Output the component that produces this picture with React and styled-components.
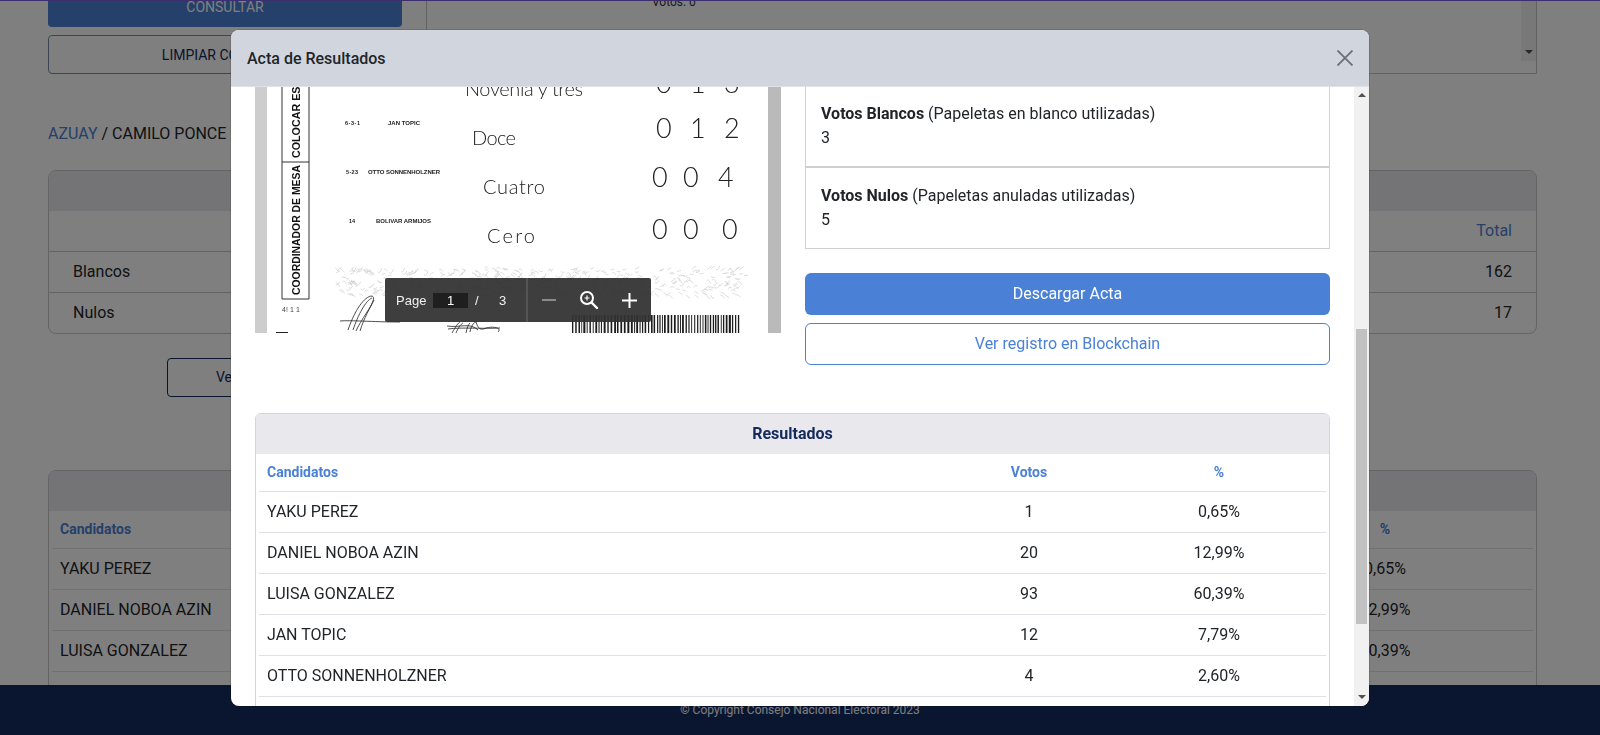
import React from 'react';
import styled, { createGlobalStyle } from 'styled-components';

const GlobalStyle = createGlobalStyle`
  html, body {
    margin: 0;
    padding: 0;
    height: 100%;
    overflow: hidden;
    background: #fff;
    font-family: Roboto, "Liberation Sans", sans-serif;
    color: #212529;
  }
  * { box-sizing: border-box; }
`;

const BLUE = '#4a80d5';
const NAVY = '#14295c';

const candidates = [
  ['YAKU PEREZ', '1', '0,65%'],
  ['DANIEL NOBOA AZIN', '20', '12,99%'],
  ['LUISA GONZALEZ', '93', '60,39%'],
  ['JAN TOPIC', '12', '7,79%'],
  ['OTTO SONNENHOLZNER', '4', '2,60%'],
  ['BOLIVAR ARMIJOS', '0', '0,00%'],
];

/* page behind the modal */
const Page = styled.div`
  height: 735px;
  display: flex;
  flex-direction: column;
  border-top: 1px solid #7a5ce0;
`;

const Main = styled.main`
  flex: 1;
  min-height: 0;
  overflow: hidden;
  padding: 0 63px 0 48px;
`;

const TopRow = styled.section`
  height: 73px;
  display: flex;
  gap: 24px;
  overflow: hidden;
`;

const Filters = styled.div`
  width: 354px;
  flex-shrink: 0;
  display: flex;
  flex-direction: column;
  justify-content: flex-end;
  gap: 8px;
`;

const ConsultBtn = styled.div`
  flex: 0 0 40px;
  display: flex;
  align-items: center;
  justify-content: center;
  background: ${BLUE};
  border-radius: 4px;
  color: #fff;
  font-size: 14px;
`;

const ClearBtn = styled.div`
  flex: 0 0 39px;
  display: flex;
  align-items: center;
  justify-content: center;
  border: 1px solid #7d8ba5;
  border-radius: 4px;
  color: ${NAVY};
  font-size: 14px;
`;

const MapPanel = styled.div`
  flex: 1;
  display: flex;
  justify-content: space-between;
  border: 1px solid #c4c4c4;
  border-top: 0;
  padding-left: 225px;
`;

const PanelText = styled.span`
  margin-top: -5px;
  font-size: 12px;
  line-height: 12px;
  color: #333;
`;

const PanelRail = styled.div`
  width: 15px;
  height: 60px;
  background: #f1f1f1;
  display: flex;
  flex-direction: column;
  justify-content: flex-end;
  align-items: center;
  padding-bottom: 7px;
`;

const ArrowDown = styled.span`
  width: 0;
  height: 0;
  border-left: 4px solid transparent;
  border-right: 4px solid transparent;
  border-top: 4px solid #505050;
`;

const ArrowUp = styled.span`
  width: 0;
  height: 0;
  border-left: 4px solid transparent;
  border-right: 4px solid transparent;
  border-bottom: 4px solid #505050;
`;

const Crumbs = styled.div`
  margin-top: 48px;
  font-size: 16px;
  line-height: 24px;
  span { color: ${BLUE}; }
`;

const BackCard = styled.section`
  margin-top: ${(p) => p.$top}px;
  border: 1px solid #c8c8c8;
  border-radius: 8px;
  overflow: hidden;
`;

const BackHead = styled.div`
  height: 40px;
  background: #e8e8ed;
`;

const BackRow = styled.div`
  height: ${(p) => (p.$first ? 40 : 41)}px;
  padding: 0 24px 2px;
  display: flex;
  align-items: center;
  justify-content: space-between;
  border-top: ${(p) => (p.$first ? '0' : '1px solid #c8c8c8')};
  font-size: 16px;
`;

const TotalLabel = styled.span`
  margin-left: auto;
  color: ${BLUE};
`;

const DetailBtn = styled.div`
  display: inline-block;
  margin: 24px 0 0 119px;
  height: 39px;
  line-height: 37px;
  padding: 0 48px;
  border: 1px solid ${NAVY};
  border-radius: 4px;
  color: ${NAVY};
  font-size: 14px;
`;

const Footer = styled.footer`
  flex: 0 0 50px;
  display: flex;
  align-items: center;
  justify-content: center;
  background: #142c60;
  color: #f8f9ff;
  font-size: 12px;
`;

const BackTableWrap = styled.div`
  padding: 0 3px;
`;

/* results table, used behind the modal and inside it */
const Table = styled.table`
  width: 100%;
  table-layout: fixed;
  border-collapse: collapse;
`;

const Th = styled.th`
  height: 37px;
  padding: 0 8px;
  font-size: 14px;
  font-weight: 700;
  color: ${BLUE};
  text-align: ${(p) => (p.$left ? 'left' : 'center')};
  border-bottom: 1px solid #dee2e6;
`;

const Td = styled.td`
  height: 41px;
  padding: 0 8px;
  font-size: 16px;
  text-align: ${(p) => (p.$left ? 'left' : 'center')};
  border-bottom: 1px solid #dee2e6;
`;

/* modal */
const Backdrop = styled.div`
  position: fixed;
  inset: 0;
  background: rgba(0, 0, 0, 0.5);
  display: flex;
  justify-content: center;
  align-items: flex-start;
  padding-top: 30px;
`;

const Modal = styled.div`
  width: 1138px;
  height: 676px;
  display: flex;
  flex-direction: column;
  background: #fff;
  border-radius: 8px;
  box-shadow: 0 0 0 1px rgba(0, 0, 0, 0.12);
  overflow: hidden;
`;

const ModalHead = styled.header`
  flex: 0 0 57px;
  display: flex;
  align-items: center;
  justify-content: space-between;
  padding: 0 16px;
  background: #d1d5de;
  border-bottom: 1px solid #dfe2e8;
`;

const ModalTitle = styled.h5`
  margin: 0;
  font-size: 16px;
  font-weight: 500;
  color: #212529;
`;

const CloseBtn = styled.button`
  width: 16px;
  height: 16px;
  padding: 0;
  border: 0;
  background: none;
  color: #6b6f75;
  display: flex;
`;

const ModalBody = styled.div`
  flex: 1;
  min-height: 0;
  display: flex;
`;

const Content = styled.div`
  flex: 1;
  min-width: 0;
  overflow: hidden;
  padding: 0 24px;
`;

const Rail = styled.div`
  flex: 0 0 15px;
  background: #f1f1f1;
  display: flex;
  flex-direction: column;
  align-items: center;
  padding: 6px 0 7px;
`;

const Thumb = styled.div`
  width: 11px;
  height: 295px;
  margin-top: 232px;
  margin-bottom: auto;
  background: #c1c1c1;
`;

const TopGrid = styled.div`
  display: grid;
  grid-template-columns: 526px 525px;
  gap: 24px;
`;

const Viewer = styled.div`
  position: relative;
  height: 246px;
`;

const ScanSvg = styled.svg`
  display: block;
`;

const Toolbar = styled.div`
  position: absolute;
  left: 130px;
  top: 191px;
  width: 266px;
  height: 44px;
  display: flex;
  align-items: center;
  background: rgba(50, 50, 50, 0.94);
  border-radius: 2px;
  color: #f1f1f1;
  font-family: "Liberation Sans", sans-serif;
  font-size: 13px;
`;

const PageLabel = styled.span`
  margin-left: 11px;
  width: 37px;
`;

const PageInput = styled.span`
  width: 35px;
  height: 15px;
  background: #1f1f1f;
  color: #fff;
  text-align: center;
  line-height: 15px;
`;

const Slash = styled.span`
  margin-left: 7px;
  width: 24px;
`;

const PageCount = styled.span`
  width: 27px;
`;

const ToolDivider = styled.span`
  width: 2px;
  height: 44px;
  background: #555;
`;

const ToolBtn = styled.span`
  width: ${(p) => p.$w}px;
  display: flex;
  justify-content: center;
  align-items: center;
  color: ${(p) => (p.$off ? '#8a8a8a' : '#fff')};
`;

const Stats = styled.div`
  display: flex;
  flex-direction: column;
`;

const StatList = styled.div`
  border: 1px solid #d0d0d0;
  border-top: 0;
`;

const StatItem = styled.div`
  height: ${(p) => p.$h}px;
  padding: ${(p) => p.$pad}px 15px 0 15px;
  font-size: 16px;
  line-height: 24px;
  border-top: ${(p) => (p.$line ? '1px solid #d0d0d0' : '0')};
  border-bottom: ${(p) => (p.$line ? '0' : '1px solid #d0d0d0')};
  b { font-weight: 700; }
`;

const PrimaryBtn = styled.div`
  margin-top: 24px;
  height: 42px;
  padding-bottom: 1px;
  display: flex;
  align-items: center;
  justify-content: center;
  background: ${BLUE};
  border-radius: 6px;
  color: #fff;
  font-size: 16px;
`;

const OutlineBtn = styled.div`
  margin-top: 8px;
  height: 42px;
  padding-bottom: 1px;
  display: flex;
  align-items: center;
  justify-content: center;
  border: 1px solid ${BLUE};
  border-radius: 6px;
  color: ${BLUE};
  font-size: 16px;
`;

const ResultCard = styled.section`
  margin-top: 48px;
  border: 1px solid #d5d5d8;
  border-radius: 6px 6px 0 0;
  overflow: hidden;
`;

const ResultHead = styled.div`
  height: 40px;
  padding-bottom: 1px;
  display: flex;
  align-items: center;
  justify-content: center;
  background: #e8e8ed;
  color: ${NAVY};
  font-size: 16px;
  font-weight: 700;
`;

const ResultWrap = styled.div`
  padding: 0 3px;
`;

// sello de fondo y codigo de barras del acta escaneada
const seeded = (n, seed) => {
  let v = seed;
  return Array.from({ length: n }, () => {
    v = (v * 9301 + 49297) % 233280;
    return v / 233280;
  });
};

const noise = seeded(1800, 17);
const stampDashes = [];
for (let i = 0; i < 450; i++) {
  const x = 335 + noise[i] * 410;
  const y = 268 + noise[i + 450] * 28;
  const a = noise[i + 900] * 8 - 4;
  const b = noise[i + 1350] * 6 - 3;
  stampDashes.push(`M${x.toFixed(1)} ${y.toFixed(1)}q2 ${b.toFixed(1)} 4 ${a.toFixed(1)}`);
}

const barWidths = seeded(260, 5);
const bars = [];
let barX = 572;
barWidths.forEach((w, i) => {
  if (barX < 740) {
    if (i % 2 === 0) bars.push([barX, 0.8 + w * 1.3]);
    barX += 0.9 + w * 1.1;
  }
});

const Scan = () => (
  <ScanSvg width="526" height="246" viewBox="255 87 526 246">
    <rect x="255" y="87" width="526" height="246" fill="#fff" />
    <rect x="255" y="87" width="12" height="246" fill="#cdcdcd" />
    <rect x="768" y="87" width="13" height="246" fill="#bababa" />

    <path d="M282 87V299H309M309 87V299M282 162H309" fill="none" stroke="#333" strokeWidth="1" />
    <g fontFamily="Liberation Sans" fontWeight="700" fontSize="11.500" fill="#111">
      <text transform="translate(300 295) rotate(-90)" textLength="130" lengthAdjust="spacingAndGlyphs">COORDINADOR DE MESA</text>
      <text transform="translate(300 158) rotate(-90)" textLength="78" lengthAdjust="spacingAndGlyphs">COLOCAR EST</text>
    </g>
    <text x="282" y="312" fontFamily="Liberation Sans" fontSize="7" fill="#444" textLength="18">4! 1 1</text>
    <rect x="276" y="332" width="12" height="1" fill="#222" />

    <g fontFamily="Liberation Sans" fontSize="6" fontWeight="700" fill="#222">
      <text x="345" y="125" fontSize="5.500" textLength="15">6-3-1</text>
      <text x="388" y="125" textLength="32">JAN TOPIC</text>
      <text x="346" y="174" fontSize="5.500" textLength="12">5-23</text>
      <text x="368" y="174" textLength="72">OTTO SONNENHOLZNER</text>
      <text x="349" y="223" fontSize="5.500" textLength="6">14</text>
      <text x="376" y="223" textLength="55">BOLIVAR ARMIJOS</text>
    </g>

    <g fontFamily="Lato" fontWeight="300" fontSize="20" fill="#222">
      <text x="465" y="96" textLength="118">Novenia y tres</text>
      <text x="472" y="145" textLength="44">Doce</text>
      <text x="483" y="194" textLength="62">Cuatro</text>
      <text x="487" y="243" textLength="48">Cero</text>
    </g>

    <g fontFamily="Lato" fontWeight="300" fontSize="27" fill="#222">
      <text x="656" y="93">0</text>
      <text x="690" y="93">1</text>
      <text x="724" y="93">3</text>
      <text x="656" y="138">0</text>
      <text x="690" y="138">1</text>
      <text x="724" y="138">2</text>
      <text x="652" y="187">0</text>
      <text x="683" y="187">0</text>
      <text x="718" y="187">4</text>
      <text x="652" y="239">0</text>
      <text x="683" y="239">0</text>
      <text x="722" y="239">0</text>
    </g>

    <path d={stampDashes.join('')} stroke="#cfcfcf" strokeWidth="0.7" fill="none" />

    <g fill="none" stroke="#222" strokeWidth="0.8">
      <path d="M340 321C350 320 372 322 400 322" />
      <path d="M348 330C353 315 362 298 371 296C376 296 373 303 367 312C362 320 358 326 356 331" />
      <path d="M353 330C358 315 366 300 372 298M360 331C364 318 370 308 374 300" />
      <path d="M447 326C460 328 470 322 478 330M452 333C456 326 458 323 460 322M470 332C471 326 474 322 476 322C478 328 480 331 486 328C494 326 502 328 498 332" />
      <path d="M448 329C462 327 482 329 500 328M456 333C458 328 461 324 463 323M466 333C467 328 468 325 470 323" />
    </g>

    {bars.map(([x, w]) => (
      <rect key={x} x={x} y="315" width={w} height="18" fill="#1c1c1c" />
    ))}
  </ScanSvg>
);

const ZoomIcon = () => (
  <svg width="20" height="20" viewBox="0 0 20 20" fill="none" stroke="currentColor">
    <circle cx="8" cy="8" r="6" strokeWidth="2" />
    <path d="M12.500 12.500L18 18" strokeWidth="2.400" strokeLinecap="round" />
    <path d="M8 5.500v5M5.500 8h5" strokeWidth="1.200" />
  </svg>
);

const App = () => (
  <>
    <GlobalStyle />
    <Page>
      <Main>
        <TopRow>
          <Filters>
            <ConsultBtn>CONSULTAR</ConsultBtn>
            <ClearBtn>LIMPIAR CONSULTA</ClearBtn>
          </Filters>
          <MapPanel>
            <PanelText>Votos: 0</PanelText>
            <PanelRail>
              <ArrowDown />
            </PanelRail>
          </MapPanel>
        </TopRow>
        <Crumbs>
          <span>AZUAY</span> / CAMILO PONCE ENRIQUEZ
        </Crumbs>
        <BackCard $top={24}>
          <BackHead />
          <BackRow $first>
            <TotalLabel>Total</TotalLabel>
          </BackRow>
          <BackRow>
            Blancos<span>162</span>
          </BackRow>
          <BackRow>
            Nulos<span>17</span>
          </BackRow>
        </BackCard>
        <DetailBtn>Ver Actas</DetailBtn>
        <BackCard $top={73}>
          <BackHead />
          <BackTableWrap>
            <Table>
              <colgroup>
                <col />
                <col width="200" />
                <col width="296" />
              </colgroup>
              <thead>
                <tr>
                  <Th $left>Candidatos</Th>
                  <Th>Votos</Th>
                  <Th>%</Th>
                </tr>
              </thead>
              <tbody>
                {candidates.map(([name, votes, pct]) => (
                  <tr key={name}>
                    <Td $left>{name}</Td>
                    <Td>{votes}</Td>
                    <Td>{pct}</Td>
                  </tr>
                ))}
              </tbody>
            </Table>
          </BackTableWrap>
        </BackCard>
      </Main>
      <Footer>© Copyright Consejo Nacional Electoral 2023</Footer>
    </Page>

    <Backdrop>
      <Modal>
        <ModalHead>
          <ModalTitle>Acta de Resultados</ModalTitle>
          <CloseBtn aria-label="Cerrar">
            <svg width="16" height="16" viewBox="0 0 16 16" fill="none" stroke="currentColor" strokeWidth="1.8">
              <path d="M0.500 0.500L15.500 15.500M15.500 0.500L0.500 15.500" />
            </svg>
          </CloseBtn>
        </ModalHead>
        <ModalBody>
          <Content>
            <TopGrid>
              <Viewer>
                <Scan />
                <Toolbar>
                  <PageLabel>Page</PageLabel>
                  <PageInput>1</PageInput>
                  <Slash>/</Slash>
                  <PageCount>3</PageCount>
                  <ToolDivider />
                  <ToolBtn $w={42} $off>
                    <svg width="14" height="2" viewBox="0 0 14 2">
                      <rect width="14" height="2" fill="currentColor" />
                    </svg>
                  </ToolBtn>
                  <ToolBtn $w={38}>
                    <ZoomIcon />
                  </ToolBtn>
                  <ToolBtn $w={43}>
                    <svg width="15" height="15" viewBox="0 0 15 15">
                      <path d="M6.500 0h2v6.500H15v2H8.500V15h-2V8.500H0v-2h6.500z" fill="currentColor" />
                    </svg>
                  </ToolBtn>
                </Toolbar>
              </Viewer>
              <Stats>
                <StatList>
                  <StatItem $h={80} $pad={15}>
                    <b>Votos Blancos</b> (Papeletas en blanco utilizadas)
                    <br />3
                  </StatItem>
                  <StatItem $h={81} $pad={16} $line>
                    <b>Votos Nulos</b> (Papeletas anuladas utilizadas)
                    <br />5
                  </StatItem>
                </StatList>
                <PrimaryBtn>Descargar Acta</PrimaryBtn>
                <OutlineBtn>Ver registro en Blockchain</OutlineBtn>
              </Stats>
            </TopGrid>
            <ResultCard>
              <ResultHead>Resultados</ResultHead>
              <ResultWrap>
                <Table>
                  <colgroup>
                    <col />
                    <col width="166" />
                    <col width="214" />
                  </colgroup>
                  <thead>
                    <tr>
                      <Th $left>Candidatos</Th>
                      <Th>Votos</Th>
                      <Th>%</Th>
                    </tr>
                  </thead>
                  <tbody>
                    {candidates.map(([name, votes, pct]) => (
                      <tr key={name}>
                        <Td $left>{name}</Td>
                        <Td>{votes}</Td>
                        <Td>{pct}</Td>
                      </tr>
                    ))}
                  </tbody>
                </Table>
              </ResultWrap>
            </ResultCard>
          </Content>
          <Rail>
            <ArrowUp />
            <Thumb />
            <ArrowDown />
          </Rail>
        </ModalBody>
      </Modal>
    </Backdrop>
  </>
);

export default App;
